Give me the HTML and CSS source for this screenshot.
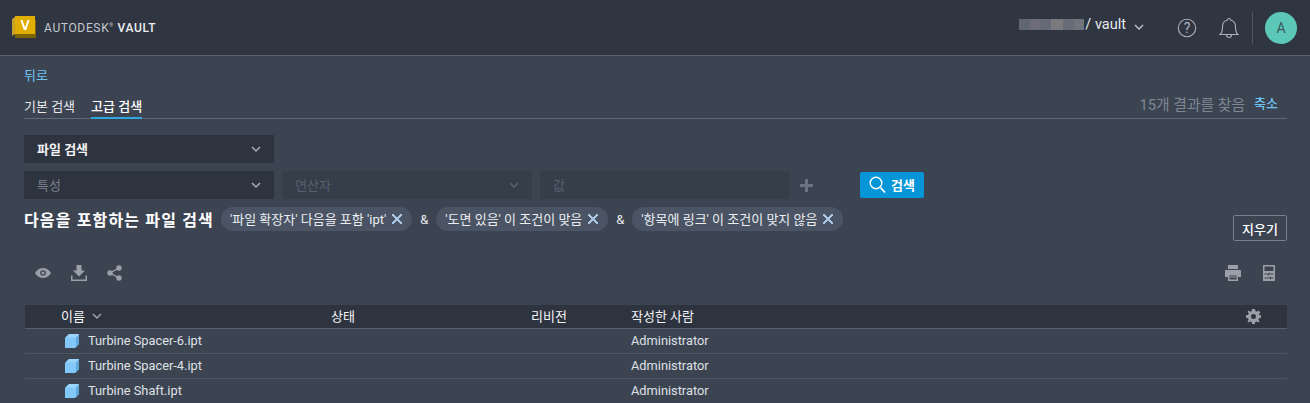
FILE: index.html
```html
<!DOCTYPE html>
<html lang="ko">
<head>
  <meta charset="UTF-8" />
  <title>Autodesk Vault</title>
  <link rel="stylesheet" href="styles.css">
</head>
<body>
  <header class="topbar">
    <div class="brand">
      <svg class="brand-logo" width="25" height="22" viewBox="0 0 25 22">
        <path d="M3 4H24V22H3Z" fill="#7d6507"/>
        <path d="M0 3L3 1V18L0 20Z" fill="#c9a227"/>
        <path d="M3 0H23V18H3Z" fill="#dfae00"/>
        <path d="M8.500 4H10.500L13 11.500L15.500 4H17.500L14.200 14H11.800Z" fill="#fff"/>
      </svg>
      <span class="brand-name">AUTODESK<sup>®</sup> <b>VAULT</b></span>
    </div>
    <div class="account">
      <span class="blurred"></span>
      <span class="vault-name">/ vault</span>
      <svg class="vault-caret" width="10" height="6" viewBox="0 0 10 6"><path d="M1 1L5 5L9 1" fill="none" stroke="#b8bec8" stroke-width="1.500"/></svg>
      <svg class="help" width="20" height="20" viewBox="0 0 20 20">
        <circle cx="10" cy="10" r="8.700" fill="none" stroke="#aab0ba" stroke-width="1.100"/>
        <text x="10" y="14.500" text-anchor="middle" class="help-mark">?</text>
      </svg>
      <svg class="bell" width="20" height="22" viewBox="0 0 20 22">
        <path d="M1 17.500C3 16 3.500 14 3.500 10C3.500 6 6 3.500 8.500 3C8.500 1 11.500 1 11.500 3C14 3.500 16.500 6 16.500 10C16.500 14 17 16 19 17.500Z M7.500 18C7.500 21.300 12.500 21.300 12.500 18" fill="none" stroke="#aab0ba" stroke-width="1.100"/>
      </svg>
      <span class="divider"></span>
      <span class="avatar">A</span>
    </div>
  </header>

  <main class="content">
    <a class="back-link">뒤로</a>

    <div class="tabs">
      <a class="tab">기본 검색</a>
      <a class="tab active">고급 검색</a>
      <span class="result-count">15개 결과를 찾음</span>
      <a class="collapse-link">축소</a>
    </div>

    <div class="select-box type-select">
      <span>파일 검색</span>
      <svg width="10" height="6" viewBox="0 0 10 6"><path d="M1 1L5 5L9 1" fill="none" stroke="#a5abb5" stroke-width="1.500"/></svg>
    </div>

    <div class="query-row">
      <div class="select-box property">
        <span>특성</span>
        <svg width="10" height="6" viewBox="0 0 10 6"><path d="M1 1L5 5L9 1" fill="none" stroke="#a5abb5" stroke-width="1.500"/></svg>
      </div>
      <div class="select-box disabled">
        <span>연산자</span>
        <svg width="10" height="6" viewBox="0 0 10 6"><path d="M1 1L5 5L9 1" fill="none" stroke="#596270" stroke-width="1.500"/></svg>
      </div>
      <div class="select-box disabled"><span>값</span></div>
      <svg class="plus" width="13" height="13" viewBox="0 0 13 13"><path d="M5 0H8V5H13V8H8V13H5V8H0V5H5Z" fill="#6a7482"/></svg>
      <button class="search-btn">
        <svg width="17" height="18" viewBox="0 0 17 18">
          <circle cx="7" cy="7" r="5.800" fill="none" stroke="#fff" stroke-width="1.400"/>
          <path d="M11.500 11.500L16 16.500" stroke="#fff" stroke-width="1.800"/>
        </svg>
        검색
      </button>
    </div>

    <div class="filter-row">
      <div class="filters">
        <strong class="filter-title">다음을 포함하는 파일 검색</strong>
        <span class="chip">'파일 확장자' 다음을 포함 'ipt' <i class="chip-x"></i></span>
        <span class="amp">&amp;</span>
        <span class="chip">'도면 있음' 이 조건이 맞음 <i class="chip-x"></i></span>
        <span class="amp">&amp;</span>
        <span class="chip">'항목에 링크' 이 조건이 맞지 않음 <i class="chip-x"></i></span>
      </div>
      <button class="clear-btn">지우기</button>
    </div>

    <div class="toolbar">
      <svg class="tool-eye" width="16" height="10" viewBox="0 0 16 10">
        <path fill-rule="evenodd" d="M0 5C2 1.500 5 0 8 0C11 0 14 1.500 16 5C14 8.500 11 10 8 10C5 10 2 8.500 0 5ZM8 2.200A2.800 2.800 0 1 0 8 7.800A2.800 2.800 0 1 0 8 2.200Z" fill="#9a9fa8"/>
        <circle cx="8" cy="5" r="1.500" fill="#9a9fa8"/>
      </svg>
      <svg class="tool-download" width="16" height="16" viewBox="0 0 16 16">
        <path d="M5.500 0H10.500V5.500H14L8 11.500L2 5.500H5.500Z M0 10.500H1.500V14.500H14.500V10.500H16V16H0Z" fill="#9a9fa8"/>
      </svg>
      <svg class="tool-share" width="15" height="16" viewBox="0 0 15 16">
        <path d="M12 3L3 8L12 13" fill="none" stroke="#9a9fa8" stroke-width="1.400"/>
        <circle cx="12" cy="3" r="2.700" fill="#9a9fa8"/>
        <circle cx="3" cy="8" r="2.700" fill="#9a9fa8"/>
        <circle cx="12" cy="13" r="2.700" fill="#9a9fa8"/>
      </svg>
      <svg class="tool-print" width="16" height="16" viewBox="0 0 16 16">
        <path fill-rule="evenodd" d="M3 0H13V4H3ZM1 5H15Q16 5 16 6V12H13V16H3V12H0V6Q0 5 1 5ZM4.500 10.500V14.500H11.500V10.500Z" fill="#9a9fa8"/>
        <path d="M5 11.500H11V12.500H5Z" fill="#9a9fa8"/>
      </svg>
      <svg class="tool-calc" width="12" height="16" viewBox="0 0 12 16">
        <path fill-rule="evenodd" d="M0 0H12V16H0ZM1.500 1.500V6H10.500V1.500ZM1.500 8.500V9.500H5V10.500H6V9.500H10.500V8.500H7V7.800H6V8.500ZM1.500 12.500V13.500H7V14.300H8V13.500H10.500V12.500H8V11.700H7V12.500Z" fill="#9a9fa8"/>
      </svg>
    </div>

    <div class="grid">
      <div class="grid-row grid-head">
        <span class="name-head">이름
          <svg width="10" height="6" viewBox="0 0 10 6"><path d="M1 1L5 5L9 1" fill="none" stroke="#a5abb5" stroke-width="1.300"/></svg>
        </span>
        <span>상태</span>
        <span>리비전</span>
        <span>작성한 사람</span>
        <svg class="gear" width="15" height="15" viewBox="0 0 15 15">
          <path fill-rule="evenodd" d="M6 0H9L9.400 2L11 2.700L12.700 1.600L13.400 2.300L14.400 4L12.700 5.300L13 6L15 6.200V8.800L13 9.200L12.400 10.800L13.500 12.500L12.400 13.400L10.800 12.400L9.200 13L9 15H6L5.800 13L4.200 12.400L2.500 13.400L1.500 12.500L2.600 10.800L2 9.200L0 8.800V6.200L2 6L2.700 4.200L1.600 2.500L2.500 1.600L4.200 2.700L5.800 2ZM7.500 5A2.500 2.500 0 1 0 7.500 10A2.500 2.500 0 1 0 7.500 5Z" fill="#9a9fa8"/>
        </svg>
      </div>
      <div class="grid-row">
        <span class="file-name">
          <svg class="part-icon" width="14" height="14" viewBox="0 0 14 14"><path d="M0 4L4 0H14V10L10 14H0Z" fill="#82c8fa"/><path d="M11 3L14 0V10L11 13.500Z" fill="#5fa8dc"/><path d="M0 4L4 0H14L11 3.500H0Z" fill="#9ad4fb"/></svg>
          Turbine Spacer-6.ipt
        </span>
        <span></span>
        <span></span>
        <span>Administrator</span>
      </div>
      <div class="grid-row">
        <span class="file-name">
          <svg class="part-icon" width="14" height="14" viewBox="0 0 14 14"><path d="M0 4L4 0H14V10L10 14H0Z" fill="#82c8fa"/><path d="M11 3L14 0V10L11 13.500Z" fill="#5fa8dc"/><path d="M0 4L4 0H14L11 3.500H0Z" fill="#9ad4fb"/></svg>
          Turbine Spacer-4.ipt
        </span>
        <span></span>
        <span></span>
        <span>Administrator</span>
      </div>
      <div class="grid-row">
        <span class="file-name">
          <svg class="part-icon" width="14" height="14" viewBox="0 0 14 14"><path d="M0 4L4 0H14V10L10 14H0Z" fill="#82c8fa"/><path d="M11 3L14 0V10L11 13.500Z" fill="#5fa8dc"/><path d="M0 4L4 0H14L11 3.500H0Z" fill="#9ad4fb"/></svg>
          Turbine Shaft.ipt
        </span>
        <span></span>
        <span></span>
        <span>Administrator</span>
      </div>
    </div>
  </main>
</body>
</html>
```

FILE: styles.css
```css
html, body {
  height: 100%;
}

body {
  margin: 0;
  overflow: hidden;
  background: #3c4452;
  color: #f2f3f5;
  font-family: Roboto, "Noto Sans CJK KR", sans-serif;
  font-size: 13px;
}

svg {
  flex-shrink: 0;
}

.topbar {
  height: 55px;
  display: flex;
  align-items: center;
  justify-content: space-between;
  background: #2f3541;
  border-bottom: 1px solid #566070;
  padding: 0 13px 0 12px;
}

.brand {
  display: flex;
  align-items: center;
  gap: 7px;
}

.brand-logo {
  margin-top: -1px;
}

.brand-name {
  font-size: 12px;
  letter-spacing: 0.65px;
  color: #c5c8ce;
}

.brand-name sup {
  font-size: 5px;
  vertical-align: 5px;
}

.brand-name b {
  color: #eceef0;
  font-weight: 500;
}

.account {
  display: flex;
  align-items: center;
}

.blurred {
  width: 65px;
  height: 11px;
  margin-top: -6px;
  background: linear-gradient(90deg, #606674 0 17%, #6f6c7a 17% 33%, #666a78 33% 50%, #7a7a7c 50% 67%, #666c78 67% 84%, #70747c 84%);
}

.vault-name {
  font-size: 14.5px;
  margin: -6px 0 0 1px;
  color: #e8eaee;
}

.vault-caret {
  margin: -2px 0 0 8px;
}

.help {
  margin-left: 33px;
}

.help-mark {
  font-size: 14px;
  fill: #b0b6c0;
}

.bell {
  margin-left: 22px;
}

.divider {
  width: 1px;
  height: 32px;
  margin-left: 13px;
  background: #4e5664;
}

.avatar {
  width: 32px;
  height: 32px;
  margin-left: 12px;
  border-radius: 50%;
  background: #5bc8b8;
  color: #3c5a5c;
  font-size: 14px;
  display: flex;
  align-items: center;
  justify-content: center;
}

.content {
  padding: 13px 23px 0 24px;
}

.back-link {
  display: block;
  height: 14px;
  line-height: 14px;
  color: #6fc3f2;
}

.tabs {
  display: flex;
  align-items: flex-end;
  height: 34px;
  margin-top: 1px;
  margin-bottom: 16px;
  border-bottom: 1px solid #5e6a7a;
}

.tab {
  padding-bottom: 2px;
  margin-right: 16px;
  line-height: 17px;
  border-bottom: 2px solid transparent;
  margin-bottom: -1px;
  color: #e6e8ec;
}

.tab.active {
  color: #fff;
  font-weight: 500;
  border-bottom-color: #2fa8df;
}

.result-count {
  margin-left: auto;
  padding-bottom: 4px;
  color: #7e8793;
  font-size: 14.8px;
}

.collapse-link {
  margin-left: 9px;
  margin-right: 9px;
  padding-bottom: 6px;
  color: #6fc3f2;
  font-weight: 500;
}

.select-box {
  width: 250px;
  height: 28px;
  box-sizing: border-box;
  display: flex;
  align-items: center;
  justify-content: space-between;
  padding: 0 13px;
  background: #2e343f;
}

.select-box span {
  margin-top: -2px;
}

.type-select {
  font-weight: 700;
  margin-bottom: 8px;
}

.query-row {
  display: flex;
  align-items: center;
  gap: 8px;
}

.select-box.property {
  color: #7a828e;
}

.select-box.disabled {
  background: #363e4a;
  color: #586170;
}

.plus {
  margin-left: 2px;
}

.search-btn {
  width: 64px;
  height: 26px;
  margin-left: 39px;
  border: none;
  border-radius: 2px;
  background: #0696d7;
  color: #fff;
  font: 700 13px Roboto, "Noto Sans CJK KR", sans-serif;
  display: flex;
  align-items: center;
  justify-content: center;
  gap: 5px;
  padding: 0 0 1px;
}

.filter-row {
  display: flex;
  align-items: flex-end;
  justify-content: space-between;
  height: 34px;
  margin-top: 8px;
}

.filters {
  display: flex;
  align-items: center;
  align-self: flex-start;
  height: 24px;
}

.filter-title {
  font-size: 16px;
  font-weight: 700;
  letter-spacing: 1.15px;
  color: #fff;
  margin-right: 7px;
}

.chip {
  height: 24px;
  box-sizing: border-box;
  display: flex;
  align-items: center;
  gap: 6px;
  padding: 0 10px 2px 9px;
  border-radius: 12px;
  background: #4a5464;
  color: #eceef1;
}

.chip-x {
  width: 10px;
  height: 10px;
  margin-top: 2px;
  background:
    linear-gradient(45deg, transparent 42%, #a9c4e0 42% 58%, transparent 58%),
    linear-gradient(-45deg, transparent 42%, #a9c4e0 42% 58%, transparent 58%);
}

.amp {
  width: 24px;
  text-align: center;
  color: #e6e8ec;
}

.clear-btn {
  width: 54px;
  height: 26px;
  padding: 0;
  border: 1px solid #76818f;
  border-radius: 2px;
  background: transparent;
  color: #fff;
  font: 500 13px Roboto, "Noto Sans CJK KR", sans-serif;
}

.toolbar {
  display: flex;
  align-items: center;
  height: 16px;
  margin: 24px 0 24px;
}

.tool-eye {
  margin-left: 11px;
}

.tool-download {
  margin-left: 20px;
}

.tool-share {
  margin-left: 20px;
}

.tool-print {
  margin-left: auto;
}

.tool-calc {
  margin-left: 22px;
  margin-right: 12px;
}

.grid {
  margin-left: 1px;
}

.grid-row {
  display: grid;
  grid-template-columns: 270px 200px 100px 1fr;
  align-items: center;
  height: 24px;
  padding-left: 36px;
  border-bottom: 1px solid #4b5564;
  color: #dfe1e5;
  font-size: 12.8px;
}

.grid-row > span {
  margin-top: -2px;
}

.grid-head {
  position: relative;
  height: 23px;
  background: #2e343f;
  border-bottom: 1px solid #566070;
  color: #f4f5f7;
  font-size: 13px;
}

.name-head {
  display: flex;
  align-items: center;
  gap: 7px;
}

.gear {
  position: absolute;
  right: 26px;
  top: 4px;
}

.file-name {
  display: flex;
  align-items: center;
  gap: 9px;
  margin-left: 4px;
}

.part-icon {
  margin-top: 1px;
}
```
